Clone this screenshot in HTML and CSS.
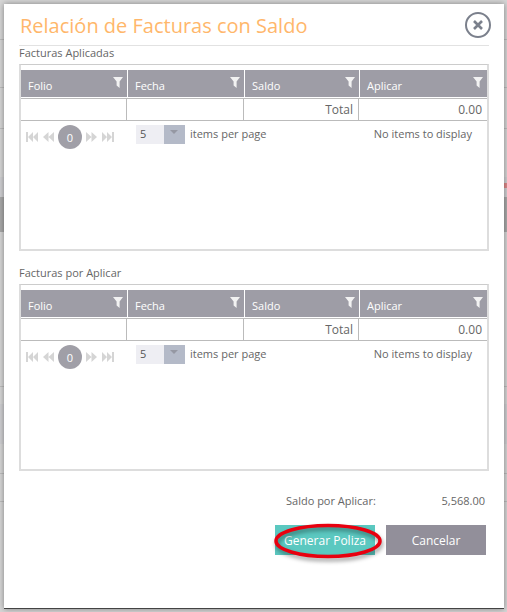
FILE: index.html
```html
<!DOCTYPE html>
<html lang="es">
<head>
	<meta charset="UTF-8">
	<title>Relación de Facturas con Saldo</title>
	<link rel="stylesheet" href="styles.css">
</head>
<body>
	<svg width="0" height="0" class="defs">
		<symbol id="filter" viewBox="0 0 10 11"><polygon points="0,0 10,0 6.6,4.6 6.6,11 3.6,8.6 3.6,4.6"/></symbol>
		<symbol id="first" viewBox="0 0 12 10"><path d="M0 0h2v10H0zM7 0v10L2 5zM12 0v10L7 5z"/></symbol>
		<symbol id="prev" viewBox="0 0 11 10"><path d="M5.5 0v10L0 5zM11 0v10L5.5 5z"/></symbol>
		<symbol id="next" viewBox="0 0 11 10"><path d="M0 0v10l5.5-5zM5.5 0v10L11 5z"/></symbol>
		<symbol id="last" viewBox="0 0 12 10"><path d="M0 0v10l5-5zM5 0v10l5-5zM10 0h2v10h-2z"/></symbol>
	</svg>

	<!-- pagina de atras, casi tapada por el dialogo -->
	<div class="backdrop">
		<div class="row line h40"></div>
		<div class="row line h48"></div>
		<div class="row line h41"></div>
		<div class="row h48"></div>
		<div class="row soft h20"></div>
		<div class="row band"><span class="red"></span></div>
		<div class="row line h155"></div>
		<div class="row h17"></div>
		<div class="row soft h40"></div>
		<div class="row line h30"></div>
		<div class="row line h28"></div>
	</div>

	<div class="dialog">
		<div class="title-bar">
			<h1>Relación de Facturas con Saldo</h1>
			<button class="close">
				<svg width="26" height="26" viewBox="0 0 26 26"><circle cx="13" cy="13" r="12" fill="none" stroke="#7b808c" stroke-width="2"/><path d="M9 9l8 8M17 9l-8 8" stroke="#7b808c" stroke-width="2.6"/></svg>
			</button>
		</div>

		<section class="block">
			<h2>Facturas Aplicadas</h2>
			<div class="grid">
				<table>
					<colgroup><col class="c1"><col class="c2"><col class="c3"><col class="c4"></colgroup>
					<thead>
						<tr>
							<th>Folio<svg class="ico"><use href="#filter"/></svg></th>
							<th>Fecha<svg class="ico"><use href="#filter"/></svg></th>
							<th>Saldo<svg class="ico"><use href="#filter"/></svg></th>
							<th>Aplicar<svg class="ico"><use href="#filter"/></svg></th>
						</tr>
					</thead>
					<tbody>
						<tr><td></td><td></td><td class="num">Total</td><td class="num">0.00</td></tr>
					</tbody>
				</table>
				<div class="pager">
					<div class="pages">
						<svg class="arrow wide"><use href="#first"/></svg>
						<svg class="arrow"><use href="#prev"/></svg>
						<span class="page">0</span>
						<svg class="arrow"><use href="#next"/></svg>
						<svg class="arrow wide"><use href="#last"/></svg>
					</div>
					<div class="size"><span class="val">5</span><span class="drop"></span></div>
					<span class="per">items per page</span>
					<span class="info">No items to display</span>
				</div>
			</div>
		</section>

		<section class="block second">
			<h2>Facturas por Aplicar</h2>
			<div class="grid">
				<table>
					<colgroup><col class="c1"><col class="c2"><col class="c3"><col class="c4"></colgroup>
					<thead>
						<tr>
							<th>Folio<svg class="ico"><use href="#filter"/></svg></th>
							<th>Fecha<svg class="ico"><use href="#filter"/></svg></th>
							<th>Saldo<svg class="ico"><use href="#filter"/></svg></th>
							<th>Aplicar<svg class="ico"><use href="#filter"/></svg></th>
						</tr>
					</thead>
					<tbody>
						<tr><td></td><td></td><td class="num">Total</td><td class="num">0.00</td></tr>
					</tbody>
				</table>
				<div class="pager">
					<div class="pages">
						<svg class="arrow wide"><use href="#first"/></svg>
						<svg class="arrow"><use href="#prev"/></svg>
						<span class="page">0</span>
						<svg class="arrow"><use href="#next"/></svg>
						<svg class="arrow wide"><use href="#last"/></svg>
					</div>
					<div class="size"><span class="val">5</span><span class="drop"></span></div>
					<span class="per">items per page</span>
					<span class="info">No items to display</span>
				</div>
			</div>
		</section>

		<div class="saldo"><span>Saldo por Aplicar:</span><span>5,568.00</span></div>

		<div class="actions">
			<div class="btn-wrap">
				<button class="btn teal">Generar Poliza</button>
				<svg class="mark" width="112" height="40" viewBox="0 0 112 40"><ellipse cx="55" cy="19" rx="52" ry="15.5" fill="none" stroke="#e8000f" stroke-width="3.5"/></svg>
			</div>
			<button class="btn gray">Cancelar</button>
		</div>
	</div>
</body>
</html>
```

FILE: styles.css
```css
* {
	margin: 0;
	padding: 0;
	box-sizing: border-box;
}
html, body {
	height: 100%;
}
body {
	font-family: "Open Sans", "Liberation Sans", sans-serif;
	background: #d6d6d6;
	overflow: hidden;
}
.defs {
	position: absolute;
}
.backdrop {
	height: 612px;
}
.row.line {
	border-bottom: 1px solid #bdbdbd;
}
.soft {
	background: #cfcfd2;
}
.h17 { height: 17px; }
.h20 { height: 20px; }
.h28 { height: 28px; }
.h30 { height: 30px; }
.h40 { height: 40px; }
.h41 { height: 41px; }
.h48 { height: 48px; }
.h155 { height: 155px; }
.band {
	height: 35px;
	background: #a9a9a9;
	display: flex;
	justify-content: flex-end;
}
.red {
	width: 3px;
	height: 5px;
	margin-top: -14px;
	background: #dd8a8a;
}
.dialog {
	position: absolute;
	left: 4px;
	top: 4px;
	width: 500px;
	height: 605px;
	padding: 0 15px;
	background: #fff;
	border-bottom: 1px solid #444;
	box-shadow: 0 0 6px rgba(0, 0, 0, .4);
}
.title-bar {
	height: 42px;
	padding-top: 7px;
	display: flex;
	justify-content: space-between;
	border-bottom: 1px solid #e2e2e2;
	position: relative;
}
h1 {
	font-size: 20px;
	font-weight: 400;
	line-height: 30px;
	color: #ffb76b;
	padding-left: 1px;
}
.close {
	position: absolute;
	right: -2px;
	top: 8px;
	width: 26px;
	height: 26px;
	border: 0;
	background: none;
}
.block h2 {
	font-size: 11px;
	font-weight: 400;
	color: #666;
	line-height: 14px;
	height: 18px;
}
.second {
	margin-top: 15px;
}
.grid {
	width: 470px;
	height: 187px;
	border: 2px solid #ddd;
	border-top: 1px solid #ccc;
	padding-top: 5px;
}
table {
	width: 466px;
	table-layout: fixed;
	border-collapse: separate;
	border-spacing: 0;
}
.c1 { width: 106px; }
.c2 { width: 117px; }
.c3 { width: 115px; }
.c4 { width: 128px; }
th {
	position: relative;
	height: 28px;
	background: #9e9da6;
	color: #fff;
	font-size: 11px;
	font-weight: 500;
	text-align: left;
	padding: 3px 0 0 7px;
	border-left: 1px solid #fff;
	border-bottom: 1px solid #fff;
}
th:first-child {
	border-left: 0;
}
.ico {
	position: absolute;
	right: 4px;
	top: 7px;
	width: 10px;
	height: 11px;
	fill: #f2f2f2;
}
td {
	height: 23px;
	font-size: 12px;
	color: #666;
	border-top: 1px solid #bbb;
	border-right: 1px solid #bbb;
	border-bottom: 1px solid #bbb;
	padding: 0 5px;
}
td:last-child {
	border-right: 0;
}
.num {
	text-align: right;
}
.pager {
	display: flex;
	align-items: flex-start;
	padding: 4px 0 0 5px;
	font-size: 11px;
	color: #666;
}
.pages {
	display: flex;
	align-items: center;
	width: 110px;
}
.arrow {
	width: 11px;
	height: 10px;
	fill: #d5d5d5;
}
.arrow.wide {
	width: 12px;
}
.arrow:nth-child(2) {
	margin: 0 4px 0 5px;
}
.arrow:nth-child(4) {
	margin: 0 5px 0 4px;
}
.page {
	width: 24px;
	height: 24px;
	border-radius: 50%;
	background: #a09fa7;
	color: #fff;
	font-size: 11px;
	text-align: center;
	line-height: 25px;
}
.size {
	display: flex;
	width: 49px;
	height: 19px;
	background: #eeeef3;
	font-size: 11px;
	line-height: 18px;
	color: #555;
}
.val {
	width: 28px;
	padding-left: 4px;
}
.drop {
	width: 21px;
	background: #b4bac8;
	position: relative;
}
.drop::after {
	content: "";
	position: absolute;
	left: 6px;
	top: 5px;
	border: 4px solid transparent;
	border-top: 4px solid #9598a3;
}
.per {
	margin-left: 5px;
	line-height: 18px;
}
.info {
	margin: 0 15px 0 auto;
	line-height: 18px;
	font-size: 11px;
}
.saldo {
	display: flex;
	justify-content: space-between;
	width: 199px;
	margin: 22px 0 0 267px;
	font-size: 11px;
	line-height: 16px;
	color: #666;
}
.actions {
	display: flex;
	justify-content: flex-end;
	gap: 11px;
	margin-top: 16px;
	padding-right: 3px;
}
.btn-wrap {
	position: relative;
}
.btn {
	display: block;
	width: 100px;
	height: 30px;
	border: 0;
	color: #fff;
	font-family: inherit;
	font-size: 12px;
}
.teal {
	background: #5bc8c0;
}
.gray {
	background: #928f9a;
}
.mark {
	position: absolute;
	left: -2px;
	top: -3px;
	filter: drop-shadow(1px 3px 2px rgba(0, 0, 0, .4));
}
```
